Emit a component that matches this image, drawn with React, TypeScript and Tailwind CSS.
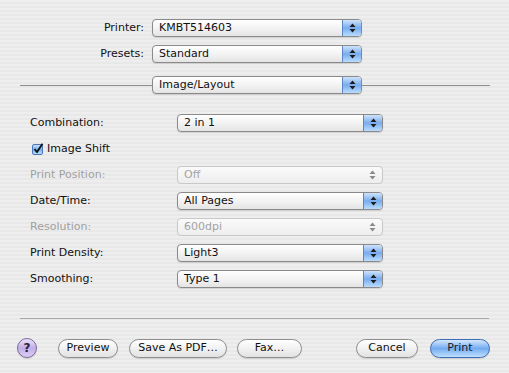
import React from "react";

// Aqua-style Mac print dialog, Image/Layout pane

function Arrows({ disabled }: { disabled?: boolean }) {
  const fill = disabled ? "#8a8a8a" : "#1c1c1c";
  return (
    <svg width="7" height="10" viewBox="0 0 7 10">
      <polygon points="3.5,0.5 6.5,4 0.5,4" fill={fill} />
      <polygon points="0.5,6 6.5,6 3.5,9.5" fill={fill} />
    </svg>
  );
}

function Popup({
  value,
  className,
  disabled,
}: {
  value: string;
  className: string;
  disabled?: boolean;
}) {
  return (
    <div
      className={`flex h-[18px] overflow-hidden rounded-[4px] border ${
        disabled
          ? "border-[#c8c8c8] bg-gradient-to-b from-[#fafafa] to-[#eeeeee]"
          : "border-[#8a8a8a] bg-gradient-to-b from-white via-[#f3f3f3] to-[#e4e4e4] shadow-[0_1px_1px_rgba(0,0,0,0.12)]"
      } ${className}`}
    >
      <span
        className={`flex-1 pl-[6px] leading-[16px] ${
          disabled ? "text-[#a3a3a3]" : "text-[#111]"
        }`}
      >
        {value}
      </span>
      <span
        className={`flex w-[19px] items-center justify-center ${
          disabled
            ? ""
            : "border-l border-[#5a86c4] bg-gradient-to-b from-[#cfe3fb] via-[#78acee] to-[#b9dcfd]"
        }`}
      >
        <Arrows disabled={disabled} />
      </span>
    </div>
  );
}

function Pill({ label, primary, className }: { label: string; primary?: boolean; className: string }) {
  return (
    <div
      className={`flex h-[19px] items-center justify-center rounded-full border ${
        primary
          ? "border-[#3d6db3] bg-gradient-to-b from-[#d4e7fd] via-[#74abf0] to-[#bfe0fe] text-[#0d1a2e]"
          : "border-[#8e8e8e] bg-gradient-to-b from-white via-[#f1f1f1] to-[#e2e2e2] text-[#111]"
      } shadow-[0_1px_1px_rgba(0,0,0,0.12)] ${className}`}
    >
      {label}
    </div>
  );
}

const rows: { label: string; value: string; disabled?: boolean }[] = [
  { label: "Print Position:", value: "Off", disabled: true },
  { label: "Date/Time:", value: "All Pages" },
  { label: "Resolution:", value: "600dpi", disabled: true },
  { label: "Print Density:", value: "Light3" },
  { label: "Smoothing:", value: "Type 1" },
];

export default function App() {
  return (
    <div className="flex h-[373px] w-[509px] flex-col bg-[repeating-linear-gradient(180deg,#eeeeee_0px,#eeeeee_2px,#e8e8e8_2px,#e8e8e8_4px)] font-['DejaVu_Sans',sans-serif] text-[11px] text-[#111]">
      {/* printer / presets */}
      <div className="mt-[19px] grid grid-cols-[144px_210px] items-center gap-x-2 gap-y-[8px]">
        <span className="text-right">Printer:</span>
        <Popup value="KMBT514603" className="w-[210px]" />
        <span className="text-right">Presets:</span>
        <Popup value="Standard" className="w-[210px]" />
      </div>

      {/* pane selector */}
      <div className="mt-[13px] flex items-center pl-[20px]">
        <div className="h-px w-[132px] bg-[#8f8f8f]" />
        <Popup value="Image/Layout" className="w-[210px]" />
        <div className="h-px w-[128px] bg-[#8f8f8f]" />
      </div>

      {/* options */}
      <div className="mt-[20px] flex flex-col gap-[8px] pl-[30px]">
        <div className="flex h-[18px] items-center">
          <span className="w-[147px]">Combination:</span>
          <Popup value="2 in 1" className="w-[206px]" />
        </div>
        <div className="flex h-[18px] items-center gap-[3px] pl-[2px]">
          <svg width="12" height="12" viewBox="0 0 12 12">
            <defs>
              <linearGradient id="cb" x1="0" y1="0" x2="0" y2="1">
                <stop offset="0" stopColor="#d2e6fc" />
                <stop offset="0.5" stopColor="#77abef" />
                <stop offset="1" stopColor="#bfe0fe" />
              </linearGradient>
            </defs>
            <rect x="0.5" y="1.5" width="10" height="10" rx="1.5" fill="url(#cb)" stroke="#4b78b8" />
            <path d="M2.5 6.2 L5 9 L10.5 0.8" fill="none" stroke="#111" strokeWidth="1.8" />
          </svg>
          <span>Image Shift</span>
        </div>
        {rows.map((r) => (
          <div key={r.label} className="flex h-[18px] items-center">
            <span className={`w-[147px] ${r.disabled ? "text-[#a0a0a0]" : ""}`}>{r.label}</span>
            <Popup value={r.value} disabled={r.disabled} className="w-[206px]" />
          </div>
        ))}
      </div>

      {/* bottom separator */}
      <div className="mx-[20px] mt-[30px] h-px bg-[#a8a8a8]" />

      {/* buttons */}
      <div className="mt-[19px] flex items-center pl-[17px]">
        <div className="flex h-[20px] w-[20px] items-center justify-center rounded-full border border-[#7a6a9c] bg-gradient-to-b from-[#ece3fa] via-[#c2aee6] to-[#dccdf5] text-[12px] font-bold text-[#2a1f40] shadow-[0_1px_1px_rgba(0,0,0,0.15)]">
          ?
        </div>
        <Pill label="Preview" className="ml-[21px] w-[60px]" />
        <Pill label="Save As PDF…" className="ml-[11px] w-[98px]" />
        <Pill label="Fax…" className="ml-[10px] w-[65px]" />
        <Pill label="Cancel" className="ml-[54px] w-[62px]" />
        <Pill label="Print" primary className="ml-[12px] w-[60px]" />
      </div>
    </div>
  );
}
